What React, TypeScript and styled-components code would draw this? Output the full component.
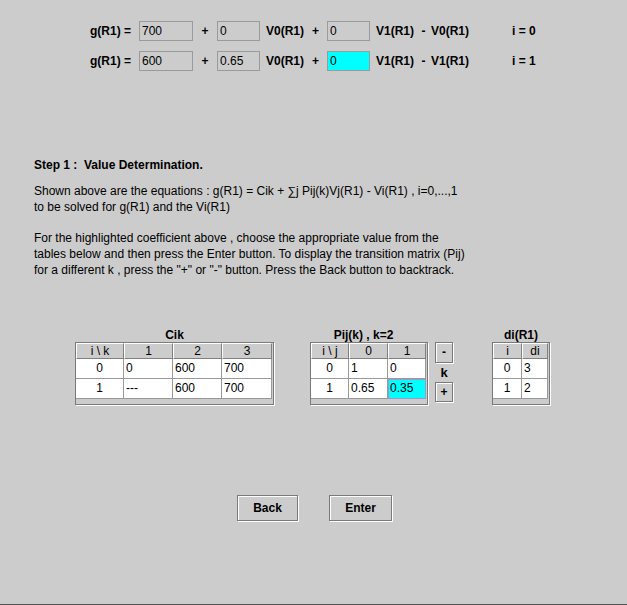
import React from "react";
import styled, { createGlobalStyle } from "styled-components";

const Global = createGlobalStyle`
  html, body { margin: 0; padding: 0; background: #cccccc; }
  body { font-family: "Liberation Sans", Arial, sans-serif; font-size: 12px; color: #000; }
`;

const Page = styled.div`
  width: 627px;
  height: 605px;
  box-sizing: border-box;
  background: #cccccc;
  border-bottom: 1px solid #555555;
  display: flex;
  flex-direction: column;
`;

const Equations = styled.div`
  display: flex;
  flex-direction: column;
  gap: 10px;
  padding: 21px 0 0 90px;
`;

const EqRow = styled.div`
  display: flex;
  align-items: center;
  height: 20px;
  font-weight: bold;
`;

const Label = styled.span<{ $w: number; $pad?: number }>`
  width: ${(p) => p.$w}px;
  padding-left: ${(p) => p.$pad ?? 0}px;
  box-sizing: border-box;
  white-space: nowrap;
`;

const Op = styled.span<{ $w: number }>`
  width: ${(p) => p.$w}px;
  text-align: center;
`;

const Field = styled.div<{ $w: number; $hl?: boolean }>`
  width: ${(p) => p.$w}px;
  height: 20px;
  box-sizing: border-box;
  border: 1px solid #9a9a9a;
  background: ${(p) => (p.$hl ? "#00ffff" : "#cccccc")};
  font-weight: normal;
  padding-left: 2px;
  line-height: 18px;
`;

const Step = styled.div`
  margin-top: 86px;
  padding-left: 34px;
`;

const Heading = styled.div`
  font-weight: bold;
  line-height: 16px;
`;

const Body = styled.div`
  margin-top: 11px;
  line-height: 15.8px;
`;

const Line = styled.div`
  min-height: 15.8px;
  white-space: nowrap;
`;

const TablesRow = styled.div`
  display: flex;
  align-items: flex-start;
  margin-top: 49px;
  padding-left: 75px;
`;

const TableBlock = styled.div<{ $w: number; $ml?: number }>`
  width: ${(p) => p.$w}px;
  margin-left: ${(p) => p.$ml ?? 0}px;
  display: flex;
  flex-direction: column;
`;

const Title = styled.div<{ $shift?: number }>`
  height: 14px;
  line-height: 14px;
  font-weight: bold;
  text-align: center;
  padding-right: ${(p) => p.$shift ?? 0}px;
`;

const Frame = styled.div`
  border: 1px solid #7a7a7a;
  box-shadow: 1px 1px 0 #ffffff;
  background: #cccccc;
  height: 61px;
  box-sizing: content-box;
`;

const Grid = styled.div<{ $cols: string }>`
  display: grid;
  grid-template-columns: ${(p) => p.$cols};
  grid-template-rows: 16px 20px 20px;
`;

const Head = styled.div`
  box-sizing: border-box;
  border-top: 1px solid #ffffff;
  border-left: 1px solid #ffffff;
  border-right: 1px solid #808080;
  border-bottom: 1px solid #808080;
  background: #cccccc;
  text-align: center;
  line-height: 14px;
`;

const Cell = styled.div<{ $center?: boolean; $sel?: boolean }>`
  box-sizing: border-box;
  background: ${(p) => (p.$sel ? "#00ffff" : "#ffffff")};
  border-right: 1px solid #999999;
  border-bottom: 1px solid #999999;
  ${(p) => (p.$sel ? "outline: 1px solid #9999cc; outline-offset: -1px;" : "")}
  text-align: ${(p) => (p.$center ? "center" : "left")};
  padding-left: ${(p) => (p.$center ? 0 : 2)}px;
  line-height: 19px;
`;

const KColumn = styled.div`
  margin-left: 7px;
  padding-top: 14px;
  width: 18px;
  display: flex;
  flex-direction: column;
  align-items: center;
`;

const KLabel = styled.div`
  height: 19px;
  line-height: 19px;
  font-weight: bold;
  font-size: 13px;
`;

const Button = styled.button<{ $w: number; $h: number }>`
  width: ${(p) => p.$w}px;
  height: ${(p) => p.$h}px;
  box-sizing: border-box;
  margin: 0;
  padding: 0;
  background: #cccccc;
  border: 1px solid #7a7a7a;
  box-shadow: inset 1px 1px 0 #ffffff, 1px 1px 0 #ffffff;
  font-family: "Liberation Sans", Arial, sans-serif;
  font-weight: bold;
  font-size: 12px;
  color: #000;
`;

const ButtonsRow = styled.div`
  display: flex;
  gap: 31px;
  margin-top: 90px;
  padding-left: 237px;
`;

type TableProps = {
  cols: string;
  heads: string[];
  rows: { v: string; sel?: boolean }[][];
};

const DataTable = ({ cols, heads, rows }: TableProps) => (
  <Frame>
    <Grid $cols={cols}>
      {heads.map((h, i) => (
        <Head key={"h" + i}>{h}</Head>
      ))}
      {rows.map((r, ri) =>
        r.map((c, ci) => (
          <Cell key={ri + "-" + ci} $center={ci === 0} $sel={c.sel}>
            {c.v}
          </Cell>
        ))
      )}
    </Grid>
  </Frame>
);

const v = (s: string, sel?: boolean) => ({ v: s, sel });

export default function App() {
  return (
    <>
      <Global />
      <Page>
        <Equations>
          <EqRow>
            <Label $w={49}>g(R1) =</Label>
            <Field $w={54}>700</Field>
            <Op $w={24}>+</Op>
            <Field $w={43}>0</Field>
            <Label $w={44} $pad={6}>V0(R1)</Label>
            <Op $w={23}>+</Op>
            <Field $w={43}>0</Field>
            <Label $w={46} $pad={6}>V1(R1)</Label>
            <Op $w={15}>-</Op>
            <Label $w={81}>V0(R1)</Label>
            <Label $w={40}>i = 0</Label>
          </EqRow>
          <EqRow>
            <Label $w={49}>g(R1) =</Label>
            <Field $w={54}>600</Field>
            <Op $w={24}>+</Op>
            <Field $w={43}>0.65</Field>
            <Label $w={44} $pad={6}>V0(R1)</Label>
            <Op $w={23}>+</Op>
            <Field $w={43} $hl>0</Field>
            <Label $w={46} $pad={6}>V1(R1)</Label>
            <Op $w={15}>-</Op>
            <Label $w={81}>V1(R1)</Label>
            <Label $w={40}>i = 1</Label>
          </EqRow>
        </Equations>

        <Step>
          <Heading>Step 1 :&nbsp; Value Determination.</Heading>
          <Body>
            <Line>Shown above are the equations : g(R1) = Cik + ∑j Pij(k)Vj(R1) - Vi(R1) , i=0,...,1</Line>
            <Line>to be solved for g(R1) and the Vi(R1)</Line>
            <Line />
            <Line>For the highlighted coefficient above , choose the appropriate value from the</Line>
            <Line>tables below and then press the Enter button. To display the transition matrix (Pij)</Line>
            <Line>for a different k , press the "+" or "-" button. Press the Back button to backtrack.</Line>
          </Body>
        </Step>

        <TablesRow>
          <TableBlock $w={199}>
            <Title>Cik</Title>
            <DataTable
              cols="48px 49px 49px 50px"
              heads={["i \\ k", "1", "2", "3"]}
              rows={[
                [v("0"), v("0"), v("600"), v("700")],
                [v("1"), v("---"), v("600"), v("700")],
              ]}
            />
          </TableBlock>
          <TableBlock $w={118} $ml={36}>
            <Title $shift={11}>Pij(k) , k=2</Title>
            <DataTable
              cols="38px 39px 38px"
              heads={["i \\ j", "0", "1"]}
              rows={[
                [v("0"), v("1"), v("0")],
                [v("1"), v("0.65"), v("0.35", true)],
              ]}
            />
          </TableBlock>
          <KColumn>
            <Button $w={18} $h={21}>-</Button>
            <KLabel>k</KLabel>
            <Button $w={18} $h={20}>+</Button>
          </KColumn>
          <TableBlock $w={58} $ml={39}>
            <Title>di(R1)</Title>
            <DataTable
              cols="29px 26px"
              heads={["i", "di"]}
              rows={[
                [v("0"), v("3")],
                [v("1"), v("2")],
              ]}
            />
          </TableBlock>
        </TablesRow>

        <ButtonsRow>
          <Button $w={61} $h={26}>Back</Button>
          <Button $w={63} $h={26}>Enter</Button>
        </ButtonsRow>
      </Page>
    </>
  );
}
